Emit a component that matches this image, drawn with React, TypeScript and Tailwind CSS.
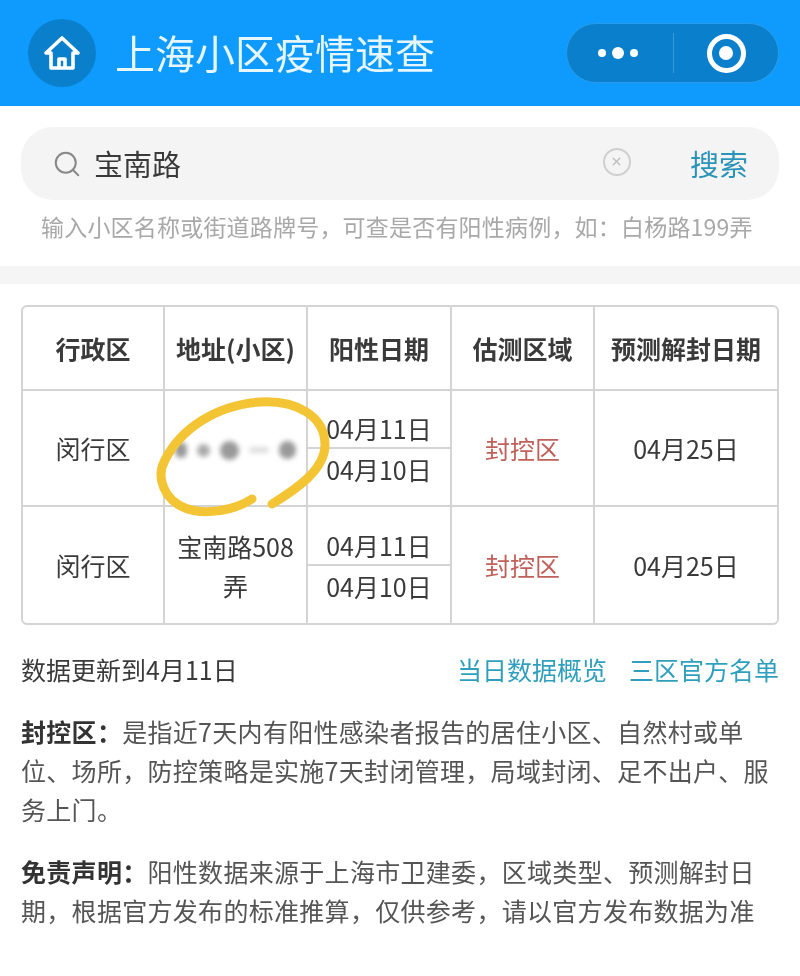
import type { ReactNode } from 'react'
import { Search, X } from 'lucide-react'

const headers = ['行政区', '地址(小区)', '阳性日期', '估测区域', '预测解封日期']

function Dates() {
  return (
    <div className="flex h-full flex-col justify-center border-r-2 border-[#d4d4d4] pt-[2px]">
      <div className="flex h-[39px] items-center justify-center border-b-2 border-[#d4d4d4] pt-[2px]">04月11日</div>
      <div className="flex h-[40px] items-center justify-center pt-[2px]">04月10日</div>
    </div>
  )
}

function Cell({ children, className = '' }: { children: ReactNode; className?: string }) {
  return (
    <div className={`flex h-full items-center justify-center border-r-2 border-[#d4d4d4] pt-[2px] text-center ${className}`}>
      {children}
    </div>
  )
}

function Row({ address, last }: { address: ReactNode; last?: boolean }) {
  return (
    <div className={`grid h-[116px] grid-cols-[142px_143px_144px_143px_1fr] ${last ? '' : 'border-b-2 border-[#d4d4d4]'}`}>
      <Cell>闵行区</Cell>
      <Cell>{address}</Cell>
      <Dates />
      <Cell className="text-[#c0605a]">封控区</Cell>
      <div className="flex items-center justify-center pt-[2px]">04月25日</div>
    </div>
  )
}

export default function App() {
  return (
    <div className="relative h-[976px] w-[800px] overflow-hidden bg-white text-[#333] blur-[0.5px] [font-family:'Noto_Sans_CJK_SC',sans-serif]">
      <header className="flex h-[106px] items-center justify-between bg-[#0f9bfd] pl-[28px] pr-[21px]">
        <div className="flex items-center gap-[19px]">
          <div className="flex h-[68px] w-[68px] items-center justify-center rounded-full bg-[#0a7fcc]">
            <svg width="38" height="38" viewBox="0 0 38 38" fill="none" stroke="white" strokeWidth="3.6" strokeLinejoin="round">
              <path d="M3 19 19 4l16 15h-5v15H8V19Z" />
              <path d="M16 34v-9h6v9" />
            </svg>
          </div>
          <span className="pb-[2px] text-[40px] leading-none text-[#e6f6ff]">上海小区疫情速查</span>
        </div>
        <div className="flex h-[60px] w-[213px] items-center rounded-full border border-[#2a9be8] bg-[#0a7fcc]">
          <div className="flex w-[106px] items-center justify-center gap-[6px] pr-[4px]">
            <span className="h-[8px] w-[8px] rounded-full bg-white" />
            <span className="h-[12px] w-[12px] rounded-full bg-white" />
            <span className="h-[8px] w-[8px] rounded-full bg-white" />
          </div>
          <div className="h-[40px] w-px bg-[#3a9bdc]" />
          <div className="flex flex-1 items-center justify-center">
            <div className="flex h-[39px] w-[39px] items-center justify-center rounded-full border-[5px] border-white">
              <span className="h-[14px] w-[14px] rounded-full bg-white" />
            </div>
          </div>
        </div>
      </header>

      <section className="px-[21px] pt-[21px]">
        <div className="flex h-[73px] items-center rounded-[32px] bg-[#f4f4f4] pl-[31px] pr-[31px]">
          <Search size={30} strokeWidth={1.6} className="text-[#888]" />
          <span className="ml-[12px] flex-1 text-[29px] text-[#3a3a3a]">宝南路</span>
          <div className="mb-[4px] mr-[59px] flex h-[28px] w-[28px] items-center justify-center rounded-full border-2 border-[#cfcfcf]">
            <X size={13} strokeWidth={2.4} className="text-[#bbb]" />
          </div>
          <span className="text-[29px] text-[#2a93b8]">搜索</span>
        </div>
        <p className="mt-[12px] whitespace-nowrap pl-[20px] text-[23px] leading-[28px] tracking-[0.2px] text-[#a8a8a8]">
          {'输入小区名称或街道路牌号\uFF0C可查是否有阳性病例\uFF0C如\uFF1A白杨路199弄'}
        </p>
      </section>

      <div className="mt-[26px] h-[18px] bg-[#f5f5f5]" />

      <main className="px-[21px] pt-[21px]">
        <div className="overflow-hidden rounded-[6px] border-2 border-[#d4d4d4] text-[25px] text-[#3a3a3a]">
          <div className="grid h-[84px] grid-cols-[142px_143px_144px_143px_1fr] border-b-2 border-[#d4d4d4] font-bold">
            {headers.map((h, i) =>
              i < 4 ? <Cell key={h}>{h}</Cell> : <div key={h} className="flex items-center justify-center pt-[2px]">{h}</div>
            )}
          </div>
          <Row
            address={
              <div className="mt-[2px] flex items-center gap-[10px] blur-[2.5px]">
                <span className="h-[16px] w-[12px] rounded-full bg-[#999]" />
                <span className="h-[13px] w-[13px] rounded-full bg-[#aaa]" />
                <span className="h-[19px] w-[19px] rounded-full bg-[#999]" />
                <span className="h-[6px] w-[20px] rounded-full bg-[#ddd]" />
                <span className="h-[18px] w-[17px] rounded-full bg-[#999]" />
              </div>
            }
          />
          <Row
            last
            address={
              <span className="block w-[126px] leading-[39px]">宝南路508弄</span>
            }
          />
        </div>

        <div className="mt-[28px] flex items-center justify-between text-[25px] leading-[32px]">
          <span className="text-[#3a3a3a]">数据更新到4月11日</span>
          <div className="flex gap-[22px] text-[#2f9fbd]">
            <span>当日数据概览</span>
            <span>三区官方名单</span>
          </div>
        </div>

        <p className="mt-[27px] text-[25px] leading-[39px] tracking-[0.3px] text-[#555] [text-spacing-trim:space-all]">
          <b className="text-[#333]">{'封控区\uFF1A'}</b>
          {'是指近7天内有阳性感染者报告的居住小区、自然村或单位、场所\uFF0C防控策略是实施7天封闭管理\uFF0C局域封闭、足不出户、服务上门。'}
        </p>
        <p className="mt-[23px] text-[25px] leading-[39px] tracking-[0.3px] text-[#555] [text-spacing-trim:space-all]">
          <b className="text-[#333]">{'免责声明\uFF1A'}</b>
          {'阳性数据来源于上海市卫建委\uFF0C区域类型、预测解封日期\uFF0C根据官方发布的标准推算\uFF0C仅供参考\uFF0C请以官方发布数据为准'}
        </p>
      </main>

      <svg className="pointer-events-none absolute left-[150px] top-[392px]" width="190" height="130" viewBox="150 392 190 130" fill="none" stroke="#f3c433" strokeWidth="9" strokeLinecap="round">
        <path d="M252 499C235 510 205 516 185 508 165 500 155 478 165 460 180 430 215 405 260 402 295 400 325 415 325 445 325 470 295 490 272 504" />
      </svg>
    </div>
  )
}
